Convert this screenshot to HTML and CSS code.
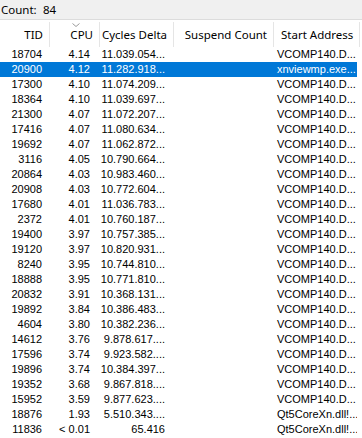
FILE: index.html
```html
<!DOCTYPE html>
<html>
<head>
<meta charset="utf-8">
<link rel="stylesheet" href="styles.css">
</head>
<body>
<div class="countbar"><span class="clabel">Count:</span><span class="cval">84</span></div>
<div class="header">
  <div class="h h-tid">TID</div>
  <div class="h h-cpu"><span class="sort"><svg width="8" height="4" viewBox="0 0 8 4"><path d="M0.5 0.5 L4 3.5 L7.5 0.5" fill="none" stroke="#9a9a9a" stroke-width="1"/></svg></span>CPU</div>
  <div class="h h-cyc">Cycles Delta</div>
  <div class="h h-sus">Suspend Count</div>
  <div class="h h-addr">Start Address</div>
</div>
<div class="rows">
  <div class="row"><span class="c tid">18704</span><span class="c cpu">4.14</span><span class="c cyc">11.039.054...</span><span class="c sus"></span><span class="c addr">VCOMP140.D...</span></div>
  <div class="row sel"><span class="c tid">20900</span><span class="c cpu">4.12</span><span class="c cyc">11.282.918...</span><span class="c sus"></span><span class="c addr">xnviewmp.exe...</span></div>
  <div class="row"><span class="c tid">17300</span><span class="c cpu">4.10</span><span class="c cyc">11.074.209...</span><span class="c sus"></span><span class="c addr">VCOMP140.D...</span></div>
  <div class="row"><span class="c tid">18364</span><span class="c cpu">4.10</span><span class="c cyc">11.039.697...</span><span class="c sus"></span><span class="c addr">VCOMP140.D...</span></div>
  <div class="row"><span class="c tid">21300</span><span class="c cpu">4.07</span><span class="c cyc">11.072.207...</span><span class="c sus"></span><span class="c addr">VCOMP140.D...</span></div>
  <div class="row"><span class="c tid">17416</span><span class="c cpu">4.07</span><span class="c cyc">11.080.634...</span><span class="c sus"></span><span class="c addr">VCOMP140.D...</span></div>
  <div class="row"><span class="c tid">19692</span><span class="c cpu">4.07</span><span class="c cyc">11.062.872...</span><span class="c sus"></span><span class="c addr">VCOMP140.D...</span></div>
  <div class="row"><span class="c tid">3116</span><span class="c cpu">4.05</span><span class="c cyc">10.790.664...</span><span class="c sus"></span><span class="c addr">VCOMP140.D...</span></div>
  <div class="row"><span class="c tid">20864</span><span class="c cpu">4.03</span><span class="c cyc">10.983.460...</span><span class="c sus"></span><span class="c addr">VCOMP140.D...</span></div>
  <div class="row"><span class="c tid">20908</span><span class="c cpu">4.03</span><span class="c cyc">10.772.604...</span><span class="c sus"></span><span class="c addr">VCOMP140.D...</span></div>
  <div class="row"><span class="c tid">17680</span><span class="c cpu">4.01</span><span class="c cyc">11.036.783...</span><span class="c sus"></span><span class="c addr">VCOMP140.D...</span></div>
  <div class="row"><span class="c tid">2372</span><span class="c cpu">4.01</span><span class="c cyc">10.760.187...</span><span class="c sus"></span><span class="c addr">VCOMP140.D...</span></div>
  <div class="row"><span class="c tid">19400</span><span class="c cpu">3.97</span><span class="c cyc">10.757.385...</span><span class="c sus"></span><span class="c addr">VCOMP140.D...</span></div>
  <div class="row"><span class="c tid">19120</span><span class="c cpu">3.97</span><span class="c cyc">10.820.931...</span><span class="c sus"></span><span class="c addr">VCOMP140.D...</span></div>
  <div class="row"><span class="c tid">8240</span><span class="c cpu">3.95</span><span class="c cyc">10.744.810...</span><span class="c sus"></span><span class="c addr">VCOMP140.D...</span></div>
  <div class="row"><span class="c tid">18888</span><span class="c cpu">3.95</span><span class="c cyc">10.771.810...</span><span class="c sus"></span><span class="c addr">VCOMP140.D...</span></div>
  <div class="row"><span class="c tid">20832</span><span class="c cpu">3.91</span><span class="c cyc">10.368.131...</span><span class="c sus"></span><span class="c addr">VCOMP140.D...</span></div>
  <div class="row"><span class="c tid">19892</span><span class="c cpu">3.84</span><span class="c cyc">10.386.483...</span><span class="c sus"></span><span class="c addr">VCOMP140.D...</span></div>
  <div class="row"><span class="c tid">4604</span><span class="c cpu">3.80</span><span class="c cyc">10.382.236...</span><span class="c sus"></span><span class="c addr">VCOMP140.D...</span></div>
  <div class="row"><span class="c tid">14612</span><span class="c cpu">3.76</span><span class="c cyc">9.878.617....</span><span class="c sus"></span><span class="c addr">VCOMP140.D...</span></div>
  <div class="row"><span class="c tid">17596</span><span class="c cpu">3.74</span><span class="c cyc">9.923.582....</span><span class="c sus"></span><span class="c addr">VCOMP140.D...</span></div>
  <div class="row"><span class="c tid">19896</span><span class="c cpu">3.74</span><span class="c cyc">10.384.397...</span><span class="c sus"></span><span class="c addr">VCOMP140.D...</span></div>
  <div class="row"><span class="c tid">19352</span><span class="c cpu">3.68</span><span class="c cyc">9.867.818....</span><span class="c sus"></span><span class="c addr">VCOMP140.D...</span></div>
  <div class="row"><span class="c tid">15952</span><span class="c cpu">3.59</span><span class="c cyc">9.877.623....</span><span class="c sus"></span><span class="c addr">VCOMP140.D...</span></div>
  <div class="row"><span class="c tid">18876</span><span class="c cpu">1.93</span><span class="c cyc">5.510.343....</span><span class="c sus"></span><span class="c addr">Qt5CoreXn.dll!...</span></div>
  <div class="row"><span class="c tid">11836</span><span class="c cpu">&lt; 0.01</span><span class="c cyc">65.416</span><span class="c sus"></span><span class="c addr">Qt5CoreXn.dll!...</span></div>
</div>
</body>
</html>
```
FILE: styles.css
```css
html, body {
  margin: 0;
  padding: 0;
  background: #ffffff;
  width: 362px;
  height: 438px;
  overflow: hidden;
}
body {
  font-family: "Liberation Sans", Arial, sans-serif;
  color: #000;
}
.countbar {
  height: 20px;
  background: #f0f0f0;
  border-bottom: 1px solid #dcdcdc;
  display: flex;
  align-items: center;
  font-family: "Noto Sans", "Open Sans", sans-serif;
  font-size: 11.5px;
  color: #000;
  box-sizing: border-box;
  padding-left: 1px;
}
.clabel { width: 42px; }
.header {
  margin-top: 2px;
  height: 25px;
  width: 360px;
  display: grid;
  grid-template-columns: 50px 50px 74px 100px 86px;
  font-family: "Noto Sans", "Open Sans", sans-serif;
  font-size: 11.5px;
  color: #000;
}
.h {
  position: relative;
  border-right: 1px solid #e5e5e5;
  display: flex;
  align-items: center;
  justify-content: flex-end;
  padding-right: 6px;
  box-sizing: border-box;
  white-space: nowrap;
  overflow: hidden;
}
.h-addr { justify-content: flex-start; padding-left: 7px; }
.sort {
  position: absolute;
  top: 1px;
  left: 22px;
  line-height: 0;
}
.rows { width: 357px; }
.row {
  height: 15px;
  display: grid;
  grid-template-columns: 50px 50px 74px 100px 83px;
  font-size: 11px;
  line-height: 15px;
  white-space: nowrap;
}
.row.sel { background: #0078d7; color: #fff; }
.c { overflow: hidden; }
.tid { text-align: right; padding-right: 8px; }
.cpu { text-align: right; padding-right: 10px; }
.cyc { text-align: right; padding-right: 9px; }
.addr { text-align: left; padding-left: 3px; }
```
